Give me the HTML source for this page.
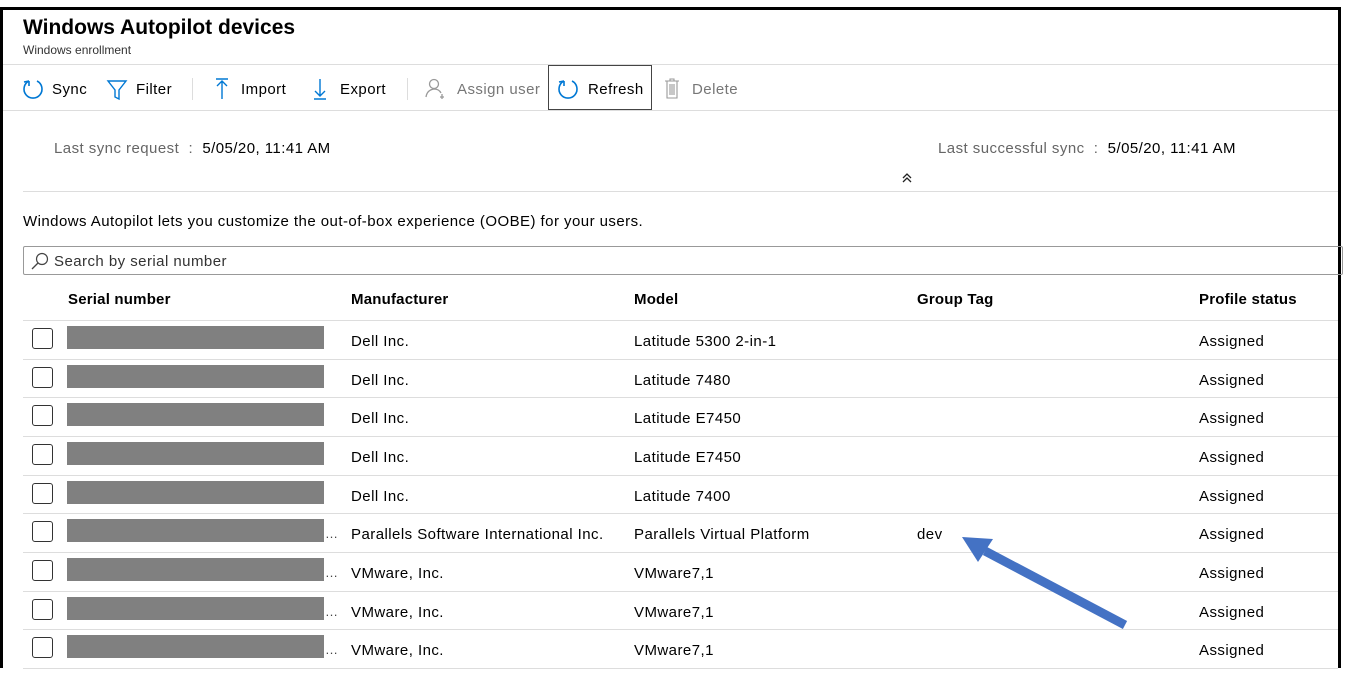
<!DOCTYPE html>
<html><head><meta charset="utf-8"><style>
*{margin:0;padding:0;box-sizing:border-box}
body{width:1358px;height:681px;background:#fff;font-family:"Liberation Sans",sans-serif;color:#000;position:relative;overflow:hidden}
.a{position:absolute;white-space:nowrap}
.hl{position:absolute;height:1px;background:#ddd}
.t{font-size:15px;letter-spacing:0.45px}
.g{color:#777}
.bar{position:absolute;left:67px;width:257px;height:23px;background:#808080}
.cb{position:absolute;left:32px;width:21px;height:21px;border:1px solid #333;border-radius:3px}
.b{font-weight:600;letter-spacing:0.2px}
</style></head><body>
<div class="a" style="left:0;top:7px;width:1341px;height:661px;border:3px solid #000;border-bottom:none"></div>
<div class="a" style="left:23px;top:16px;font-size:21px;font-weight:600">Windows Autopilot devices</div>
<div class="a" style="left:23px;top:43px;font-size:12px;color:#333">Windows enrollment</div>
<div class="hl" style="left:3px;width:1335px;top:64px"></div>
<div class="hl" style="left:3px;width:1335px;top:110px"></div>

<svg class="a" style="left:22px;top:78px" width="22" height="22" viewBox="0 0 22 22"><path d="M7 3 A9 9 0 1 0 15 3" fill="none" stroke="#0078d4" stroke-width="1.6"/><path d="M7 3 L7 8 M7 3 L2 4" stroke="#0078d4" stroke-width="1.6" fill="none"/></svg>
<div class="a t" style="left:52px;top:81px">Sync</div>
<svg class="a" style="left:106px;top:79px" width="22" height="22"><path d="M2 2 H20 L13 11 V20 L9 18 V11 Z" fill="none" stroke="#0078d4" stroke-width="1.4"/></svg>
<div class="a t" style="left:136px;top:81px">Filter</div>
<div class="a" style="left:192px;top:78px;width:1px;height:22px;background:#ddd"></div>
<svg class="a" style="left:214px;top:77px" width="16" height="24"><path d="M2 2H14 M8 4V22 M3 9L8 4L13 9" fill="none" stroke="#0078d4" stroke-width="1.4"/></svg>
<div class="a t" style="left:241px;top:81px">Import</div>
<svg class="a" style="left:312px;top:77px" width="16" height="24"><path d="M2 22H14 M8 2V19 M3 14L8 19L13 14" fill="none" stroke="#0078d4" stroke-width="1.4"/></svg>
<div class="a t" style="left:340px;top:81px">Export</div>
<div class="a" style="left:407px;top:78px;width:1px;height:22px;background:#ddd"></div>
<svg class="a" style="left:425px;top:78px" width="24" height="22"><circle cx="9" cy="6" r="4.5" fill="none" stroke="#999" stroke-width="1.3"/><path d="M1 19 Q2 12 9 11 Q14 11 16 15 M17 16v5 M15 19h4" fill="none" stroke="#999" stroke-width="1.3"/></svg>
<div class="a t g" style="left:457px;top:81px">Assign user</div>
<div class="a" style="left:548px;top:65px;width:104px;height:45px;border:1px solid #444"></div>
<svg class="a" style="left:557px;top:78px" width="22" height="22" viewBox="0 0 22 22"><path d="M7 3 A9 9 0 1 0 15 3" fill="none" stroke="#0078d4" stroke-width="1.6"/><path d="M7 3 L7 8 M7 3 L2 4" stroke="#0078d4" stroke-width="1.6" fill="none"/></svg>
<div class="a t" style="left:588px;top:81px">Refresh</div>
<svg class="a" style="left:664px;top:78px" width="16" height="22"><path d="M1 3H15 M6 3V1H10V3 M3 3V20H13V3 M6 6V17 M8 6V17 M10 6V17" fill="none" stroke="#999" stroke-width="1.1"/></svg>
<div class="a t g" style="left:692px;top:81px">Delete</div>

<div class="a t" style="left:54px;top:140px"><span style="color:#666">Last sync request&nbsp; :&nbsp; </span>5/05/20, 11:41 AM</div>
<div class="a t" style="left:938px;top:140px"><span style="color:#666">Last successful sync&nbsp; :&nbsp; </span>5/05/20, 11:41 AM</div>
<svg class="a" style="left:901px;top:172px" width="12" height="12"><path d="M2 6L6 2L10 6 M2 10L6 6L10 10" fill="none" stroke="#222" stroke-width="1.3"/></svg>
<div class="hl" style="left:23px;width:1315px;top:191px"></div>
<div class="a t" style="left:23px;top:213px">Windows Autopilot lets you customize the out-of-box experience (OOBE) for your users.</div>
<div class="a" style="left:23px;top:246px;width:1320px;height:29px;border:1px solid #999;border-radius:2px"></div>
<svg class="a" style="left:30px;top:251px" width="20" height="20"><circle cx="12" cy="8" r="5.5" fill="none" stroke="#444" stroke-width="1.2"/><path d="M8 12L2 18" stroke="#444" stroke-width="1.3"/></svg>
<div class="a t" style="left:54px;top:253px;color:#333">Search by serial number</div>

<div class="a t b" style="left:68px;top:291px">Serial number</div>
<div class="a t b" style="left:351px;top:291px">Manufacturer</div>
<div class="a t b" style="left:634px;top:291px">Model</div>
<div class="a t b" style="left:917px;top:291px">Group Tag</div>
<div class="a t b" style="left:1199px;top:291px">Profile status</div>
<div class="hl" style="left:23px;width:1315px;top:320px"></div>

<div id="rows"></div>
<script>
var d=[["Dell Inc.","Latitude 5300 2-in-1","",0],["Dell Inc.","Latitude 7480","",0],["Dell Inc.","Latitude E7450","",0],["Dell Inc.","Latitude E7450","",0],["Dell Inc.","Latitude 7400","",0],["Parallels Software International Inc.","Parallels Virtual Platform","dev",1],["VMware, Inc.","VMware7,1","",1],["VMware, Inc.","VMware7,1","",1],["VMware, Inc.","VMware7,1","",1]];
var h="",tops=[320,359,397,436,475,513,552,591,629,668];
for(var i=0;i<9;i++){var y=tops[i],n=tops[i+1];
h+='<div class="cb" style="top:'+(y+8)+'px"></div><div class="bar" style="top:'+(y+6)+'px"></div>';
if(d[i][3])h+='<div class="a" style="left:325px;top:'+(y+13)+'px;color:#444;font-size:13px">…</div>';
h+='<div class="a t" style="left:351px;top:'+(y+13)+'px">'+d[i][0]+'</div><div class="a t" style="left:634px;top:'+(y+13)+'px">'+d[i][1]+'</div><div class="a t" style="left:917px;top:'+(y+13)+'px">'+d[i][2]+'</div><div class="a t" style="left:1199px;top:'+(y+13)+'px">Assigned</div><div class="hl" style="left:23px;width:1315px;top:'+n+'px"></div>';}
document.getElementById('rows').innerHTML=h;
</script>
<svg class="a" style="left:0;top:0" width="1358" height="681"><path d="M1125 625 L985 551" stroke="#4472c4" stroke-width="9"/><path d="M962 537 L993 539 L978 562 Z" fill="#4472c4"/></svg>
</body></html>
